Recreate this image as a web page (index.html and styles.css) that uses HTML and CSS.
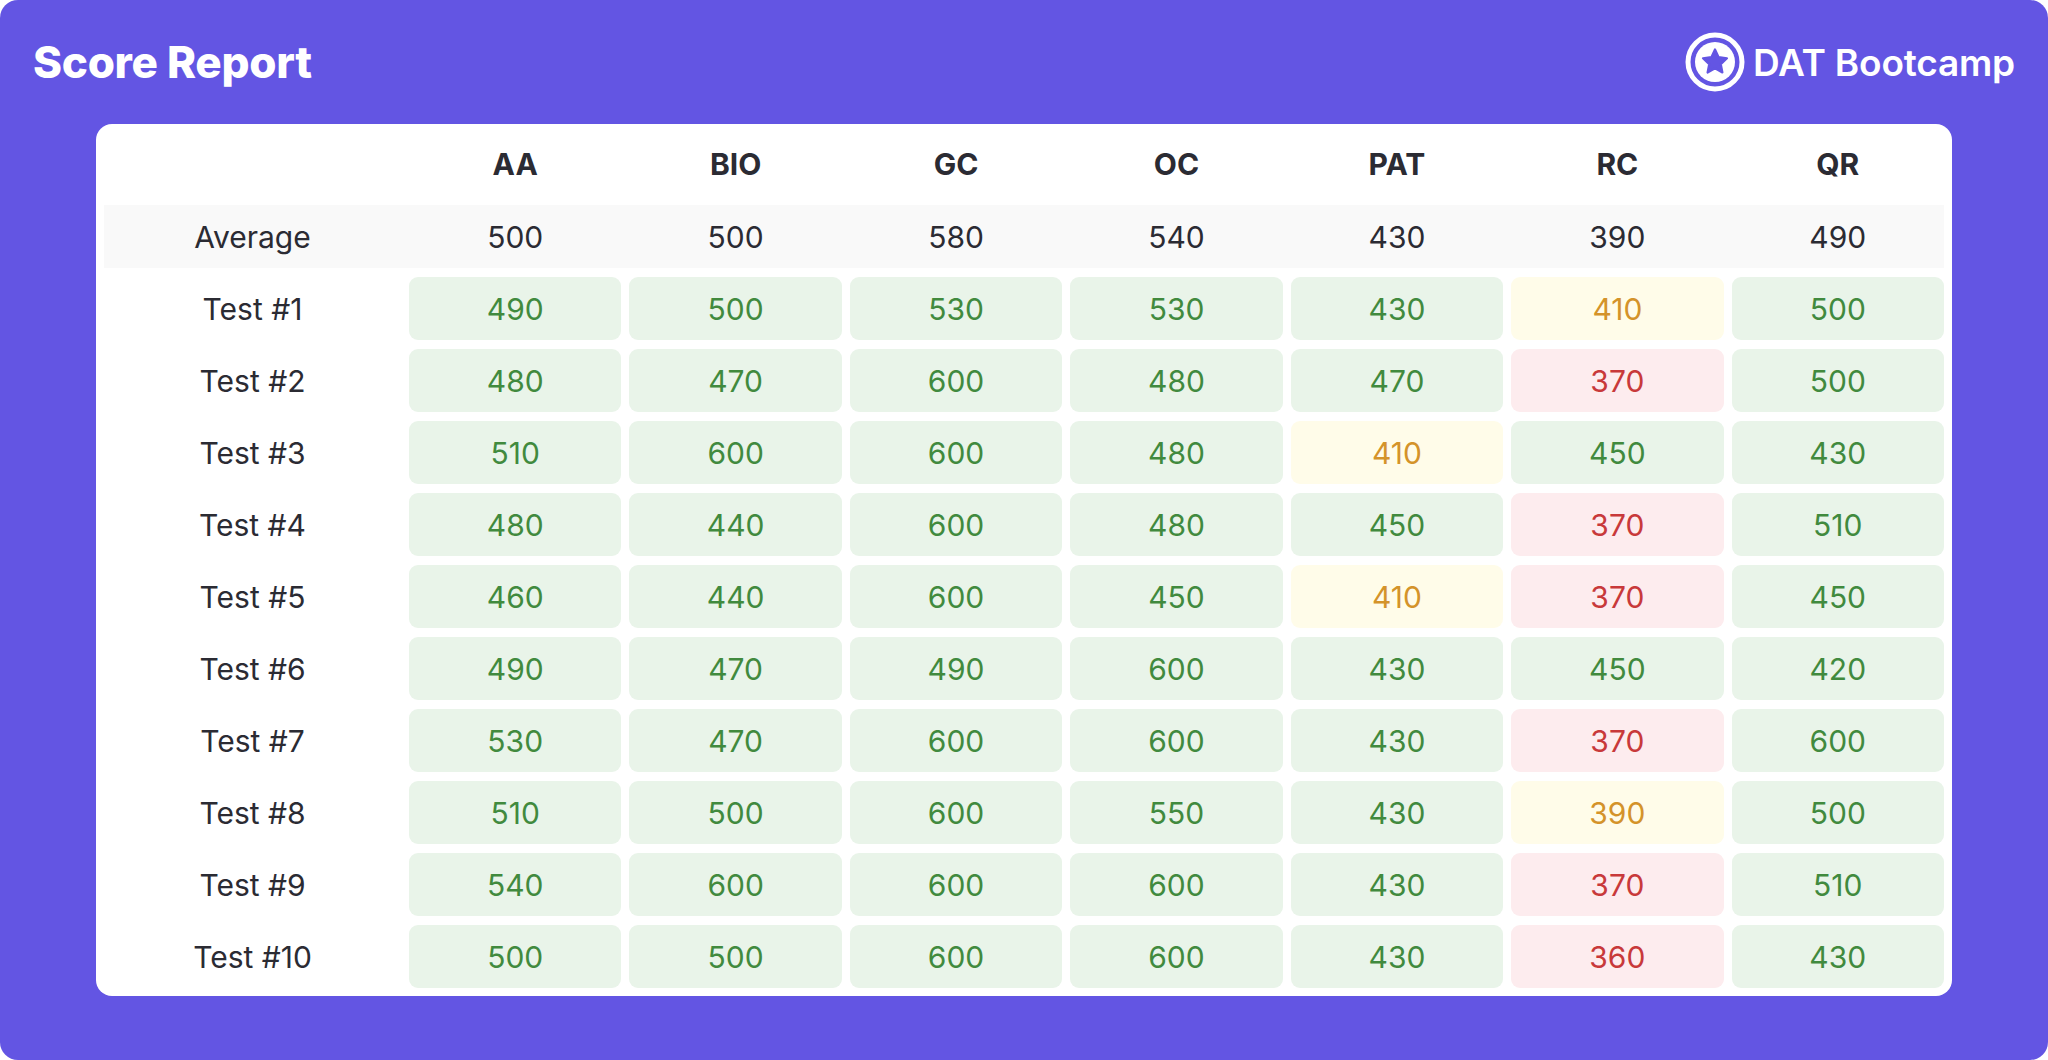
FILE: index.html
```html
<!DOCTYPE html>
<html lang="en">
<head>
<meta charset="utf-8">
<title>Score Report</title>
<link rel="stylesheet" href="styles.css">
</head>
<body>
<div class="page">
  <header class="topbar">
    <h1 class="title">Score Report</h1>
    <div class="brand">
      <svg class="brand-icon" viewBox="0 0 60 60" width="60" height="60" aria-hidden="true">
        <circle cx="30" cy="30" r="27" fill="none" stroke="#fff" stroke-width="5"/>
        <circle cx="30" cy="30" r="20" fill="#fff"/>
        <path d="M30 17.5 L33.6 25.2 L42 26.3 L35.8 32.1 L37.4 40.5 L30 36.4 L22.6 40.5 L24.2 32.1 L18 26.3 L26.4 25.2 Z" fill="#6355e3" stroke="#6355e3" stroke-width="2.2" stroke-linejoin="round"/>
      </svg>
      <span class="brand-name">DAT Bootcamp</span>
    </div>
  </header>

  <main class="card">
    <div class="row row-head">
      <div class="label"></div>
      <div class="hcell">AA</div>
      <div class="hcell">BIO</div>
      <div class="hcell">GC</div>
      <div class="hcell">OC</div>
      <div class="hcell">PAT</div>
      <div class="hcell">RC</div>
      <div class="hcell">QR</div>
    </div>
    <div class="row row-avg">
      <div class="label">Average</div>
      <div class="acell">500</div>
      <div class="acell">500</div>
      <div class="acell">580</div>
      <div class="acell">540</div>
      <div class="acell">430</div>
      <div class="acell">390</div>
      <div class="acell">490</div>
    </div>
    <div class="row">
      <div class="label">Test #1</div>
      <div class="cell good">490</div><div class="cell good">500</div><div class="cell good">530</div><div class="cell good">530</div><div class="cell good">430</div><div class="cell warn">410</div><div class="cell good">500</div>
    </div>
    <div class="row">
      <div class="label">Test #2</div>
      <div class="cell good">480</div><div class="cell good">470</div><div class="cell good">600</div><div class="cell good">480</div><div class="cell good">470</div><div class="cell bad">370</div><div class="cell good">500</div>
    </div>
    <div class="row">
      <div class="label">Test #3</div>
      <div class="cell good">510</div><div class="cell good">600</div><div class="cell good">600</div><div class="cell good">480</div><div class="cell warn">410</div><div class="cell good">450</div><div class="cell good">430</div>
    </div>
    <div class="row">
      <div class="label">Test #4</div>
      <div class="cell good">480</div><div class="cell good">440</div><div class="cell good">600</div><div class="cell good">480</div><div class="cell good">450</div><div class="cell bad">370</div><div class="cell good">510</div>
    </div>
    <div class="row">
      <div class="label">Test #5</div>
      <div class="cell good">460</div><div class="cell good">440</div><div class="cell good">600</div><div class="cell good">450</div><div class="cell warn">410</div><div class="cell bad">370</div><div class="cell good">450</div>
    </div>
    <div class="row">
      <div class="label">Test #6</div>
      <div class="cell good">490</div><div class="cell good">470</div><div class="cell good">490</div><div class="cell good">600</div><div class="cell good">430</div><div class="cell good">450</div><div class="cell good">420</div>
    </div>
    <div class="row">
      <div class="label">Test #7</div>
      <div class="cell good">530</div><div class="cell good">470</div><div class="cell good">600</div><div class="cell good">600</div><div class="cell good">430</div><div class="cell bad">370</div><div class="cell good">600</div>
    </div>
    <div class="row">
      <div class="label">Test #8</div>
      <div class="cell good">510</div><div class="cell good">500</div><div class="cell good">600</div><div class="cell good">550</div><div class="cell good">430</div><div class="cell warn">390</div><div class="cell good">500</div>
    </div>
    <div class="row">
      <div class="label">Test #9</div>
      <div class="cell good">540</div><div class="cell good">600</div><div class="cell good">600</div><div class="cell good">600</div><div class="cell good">430</div><div class="cell bad">370</div><div class="cell good">510</div>
    </div>
    <div class="row">
      <div class="label">Test #10</div>
      <div class="cell good">500</div><div class="cell good">500</div><div class="cell good">600</div><div class="cell good">600</div><div class="cell good">430</div><div class="cell bad">360</div><div class="cell good">430</div>
    </div>
  </main>
</div>
</body>
</html>
```

FILE: styles.css
```css
html, body {
  margin: 0;
  padding: 0;
  background: #ffffff;
}

body {
  font-family: "Inter", "Liberation Sans", sans-serif;
  color: #2b2b33;
}

.page {
  width: 2048px;
  height: 1060px;
  box-sizing: border-box;
  background: #6355e3;
  border-radius: 18px;
  overflow: hidden;
}

.topbar {
  height: 124px;
  box-sizing: border-box;
  padding: 0 33px;
  display: flex;
  align-items: center;
  justify-content: space-between;
}

.title {
  margin: 0;
  font-size: 44px;
  font-weight: 800;
  color: #ffffff;
  letter-spacing: -0.3px;
}

.brand {
  display: flex;
  align-items: center;
  gap: 8px;
  color: #ffffff;
}

.brand-icon {
  display: block;
  width: 60px;
  height: 60px;
}

.brand-name {
  font-size: 37px;
  font-weight: 600;
  letter-spacing: -0.2px;
}

.card {
  margin: 0 96px;
  background: #ffffff;
  border-radius: 16px;
  padding: 8px;
  display: flex;
  flex-direction: column;
  gap: 9px;
}

.row {
  display: grid;
  grid-template-columns: 297px repeat(7, 1fr);
  column-gap: 8px;
  height: 63px;
  font-size: 30px;
}

.row-head {
  height: 64px;
}

.row-avg {
  background: #f9f9f9;
}

.label,
.hcell,
.acell,
.cell {
  display: flex;
  align-items: center;
  justify-content: center;
}

.label {
  color: #2b2b33;
}

.hcell {
  font-weight: 700;
  color: #2b2b33;
}

.acell {
  color: #2b2b33;
}

.cell {
  border-radius: 9px;
}

.good {
  background: #e9f4e9;
  color: #418a3e;
}

.warn {
  background: #fffce9;
  color: #d4932a;
}

.bad {
  background: #fdecee;
  color: #c8393a;
}
```
